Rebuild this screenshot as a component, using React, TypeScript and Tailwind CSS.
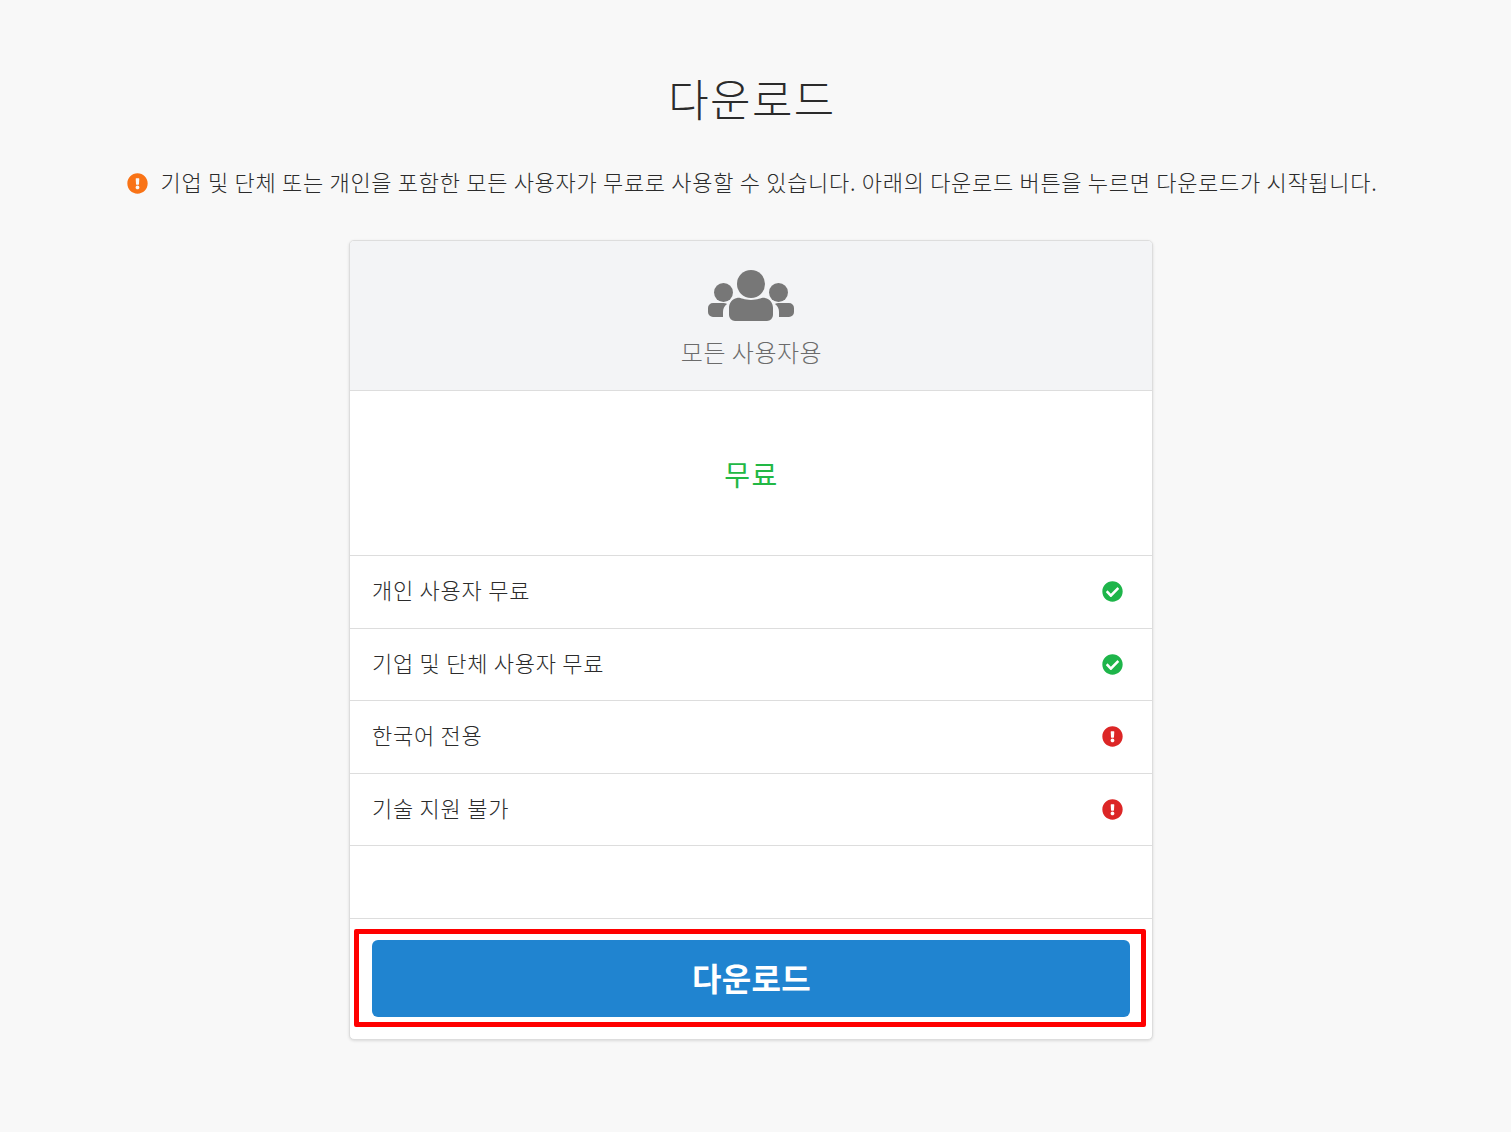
import { FaCheckCircle, FaExclamationCircle } from "react-icons/fa";

const features = [
  { label: "개인 사용자 무료", ok: true },
  { label: "기업 및 단체 사용자 무료", ok: true },
  { label: "한국어 전용", ok: false },
  { label: "기술 지원 불가", ok: false },
];

function UsersIcon() {
  return (
    <svg width="86" height="52" viewBox="0 0 86 52" fill="#777777">
      <circle cx="15.5" cy="22.5" r="9.5" />
      <circle cx="70.5" cy="22.5" r="9.5" />
      <circle cx="43" cy="14" r="14" />
      <path d="M5 33h10c1 0 3 0 4 1-3 2-4 5-4 8v5H5a5 5 0 0 1-5-5v-4a5 5 0 0 1 5-5z" />
      <path d="M81 33H71c-1 0-3 0-4 1 3 2 4 5 4 8v5h10a5 5 0 0 0 5-5v-4a5 5 0 0 0-5-5z" />
      <path d="M29 28c3-1 6 2 14 2s11-3 14-2c5 1 8 5 8 10v7a6 6 0 0 1-6 6H27a6 6 0 0 1-6-6v-7c0-5 3-9 8-10z" />
    </svg>
  );
}

export default function App() {
  return (
    <div className="min-h-[1132px] bg-[#f8f8f8] pr-[9px] font-['Noto_Sans_CJK_KR','Noto_Sans',sans-serif] font-light text-[#2b2b2b]">
      <h1 className="pt-[68px] pl-[2px] text-center text-[44px] leading-[60px] font-light tracking-[1.4px]">다운로드</h1>

      <div className="mt-[35px] flex h-[40px] items-center justify-center gap-[13px] pl-[2px] text-[22px] tracking-[0.7px]">
        <FaExclamationCircle className="h-[21px] w-[21px] text-[#f97316]" />
        <p className="mb-[3px]">기업 및 단체 또는 개인을 포함한 모든 사용자가 무료로 사용할 수 있습니다. 아래의 다운로드 버튼을 누르면 다운로드가 시작됩니다.</p>
      </div>

      <div className="mx-auto mt-[37px] w-[804px] overflow-hidden rounded-[5px] border border-[#dddddd] bg-white shadow-[0_1px_3px_rgba(0,0,0,0.12)]">
        <div className="flex h-[150px] flex-col items-center border-b border-[#dddddd] bg-[#f3f4f6] pt-[29px]">
          <UsersIcon />
          <span className="mt-[14px] pl-[1px] text-[24px] leading-[32px] tracking-[0.5px] text-[#6b6b6b]">모든 사용자용</span>
        </div>

        <div className="flex h-[165px] items-center justify-center border-b border-[#dddddd] pt-[2px] pl-[1px] text-[28px] font-normal tracking-[1.4px] text-[#22b845]">
          무료
        </div>

        {features.map((f) => (
          <div key={f.label} className="flex h-[72.5px] items-center justify-between border-b border-[#dddddd] pr-[29px] pl-[22px] text-[22px] tracking-[0.75px]">
            <span className="mb-[4px]">{f.label}</span>
            {f.ok ? (
              <FaCheckCircle className="h-[21px] w-[21px] text-[#1eb54a]" />
            ) : (
              <FaExclamationCircle className="h-[21px] w-[21px] text-[#dc2626]" />
            )}
          </div>
        ))}

        <div className="h-[72.5px] border-b border-[#dddddd]" />

        <div className="pt-[10px] pr-[6px] pb-[12px] pl-[4px]">
          <div className="rounded-[2px] border-[5px] border-[#ff0000] pt-[6px] pr-[11px] pb-[5px] pl-[13px]">
            <button className="flex h-[77px] w-full items-center justify-center rounded-[6px] bg-[#2084d0] pb-[2px] pl-[1px] text-[32px] font-bold tracking-[0.3px] text-white">
              다운로드
            </button>
          </div>
        </div>
      </div>
    </div>
  );
}
